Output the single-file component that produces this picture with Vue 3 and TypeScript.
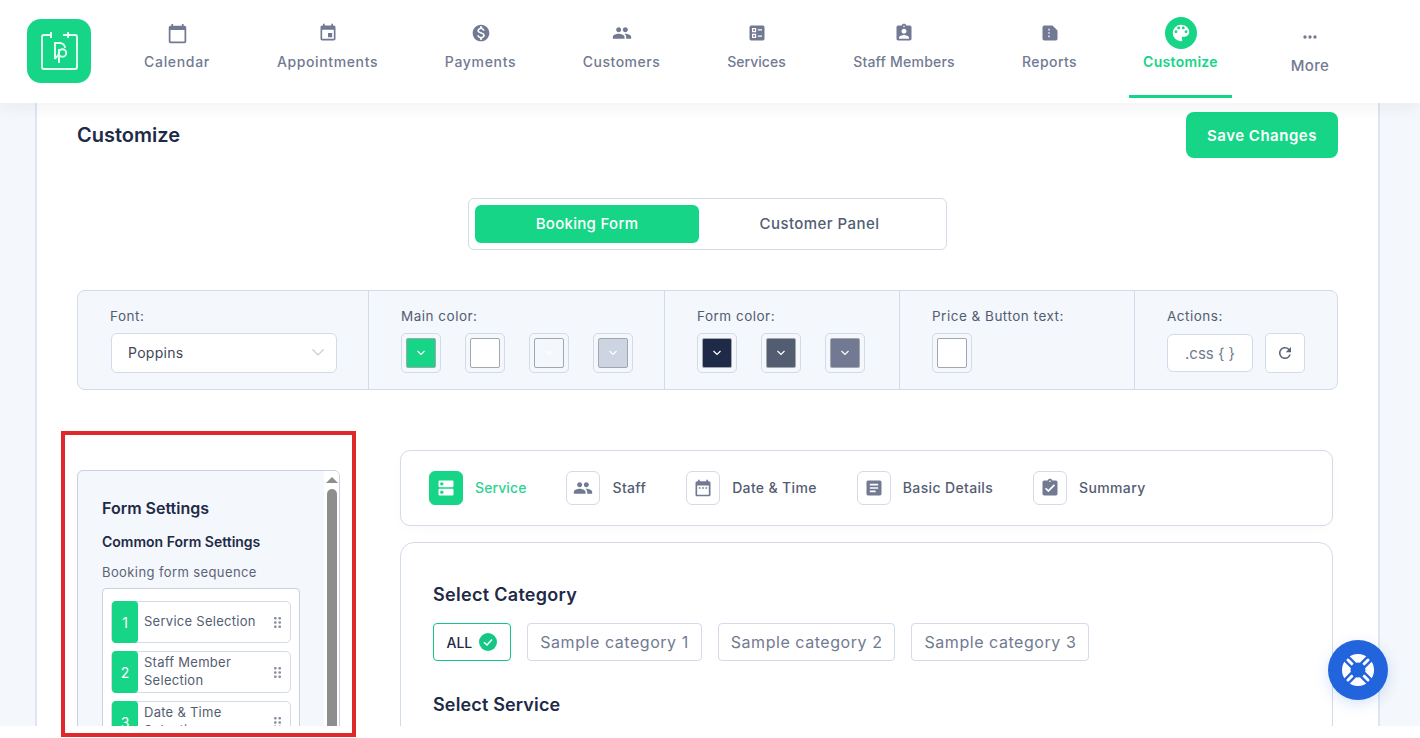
<script setup lang="ts">
interface NavItem {
  label: string;
  path: string;
  size: number;
  width: number;
  spacing: number;
  active?: boolean;
  more?: boolean;
}

const people =
  "M16 11c1.66 0 2.99-1.34 2.99-3S17.66 5 16 5c-1.66 0-3 1.34-3 3s1.34 3 3 3zm-8 0c1.66 0 2.99-1.34 2.99-3S9.66 5 8 5C6.34 5 5 6.34 5 8s1.34 3 3 3zm0 2c-2.33 0-7 1.17-7 3.5V19h14v-2.5c0-2.33-4.67-3.5-7-3.5zm8 0c-.29 0-.62.02-.97.05 1.16.84 1.97 1.97 1.97 3.45V19h6v-2.5c0-2.33-4.67-3.5-7-3.5z";

const navItems: NavItem[] = [
  { label: "Calendar", size: 21, width: 66, spacing: 0.67, path: "M20 3h-1V1h-2v2H7V1H5v2H4c-1.1 0-2 .9-2 2v16c0 1.1.9 2 2 2h16c1.1 0 2-.9 2-2V5c0-1.1-.9-2-2-2zm0 18H4V8h16v13z" },
  { label: "Appointments", size: 20, width: 101, spacing: 0.63, path: "M17 12h-5v5h5v-5zM16 1v2H8V1H6v2H5c-1.11 0-1.99.9-1.99 2L3 19c0 1.1.89 2 2 2h14c1.1 0 2-.9 2-2V5c0-1.1-.9-2-2-2h-1V1h-2zm3 18H5V8h14v11z" },
  { label: "Payments", size: 20, width: 71, spacing: 0.67, path: "M12 2C6.48 2 2 6.48 2 12s4.48 10 10 10 10-4.48 10-10S17.52 2 12 2zm1.41 16.09V20h-2.67v-1.93c-1.71-.36-3.16-1.46-3.27-3.4h1.96c.1 1.05.82 1.87 2.65 1.87 1.96 0 2.4-.98 2.4-1.59 0-.83-.44-1.61-2.67-2.14-2.48-.6-4.18-1.62-4.18-3.67 0-1.72 1.39-2.84 3.11-3.21V4h2.67v1.95c1.86.45 2.79 1.86 2.87 3.39H14.3c-.05-1.11-.64-1.87-2.22-1.87-1.5 0-2.4.68-2.4 1.64 0 .84.65 1.39 2.67 1.91s4.18 1.39 4.18 3.91c-.01 1.83-1.38 2.83-3.12 3.16z" },
  { label: "Customers", size: 20, width: 77, spacing: 0.52, path: people },
  { label: "Services", size: 20, width: 59, spacing: 0.05, path: "M5 3h14a2 2 0 0 1 2 2v14a2 2 0 0 1-2 2H5a2 2 0 0 1-2-2V5a2 2 0 0 1 2-2zM6 6v5h5V6zM7.5 7.5h2v2h-2zM13 7.5v1.5h5V7.5zM6 13v5h5v-5zM7.5 14.5h2v2h-2zM13 15v1.5h5V15z" },
  { label: "Staff Members", size: 20, width: 102, spacing: 0.22, path: "M19 3h-4.18C14.4 1.84 13.3 1 12 1c-1.3 0-2.4.84-2.82 2H5c-1.1 0-2 .9-2 2v14c0 1.1.9 2 2 2h14c1.1 0 2-.9 2-2V5c0-1.1-.9-2-2-2zm-7 0c.55 0 1 .45 1 1s-.45 1-1 1-1-.45-1-1 .45-1 1-1zm0 4c1.66 0 3 1.34 3 3s-1.34 3-3 3-3-1.34-3-3 1.34-3 3-3zm6 12H6v-1.4c0-2 4-3.1 6-3.1s6 1.1 6 3.1V19z" },
  { label: "Reports", size: 20, width: 55, spacing: 0.44, path: "M5 3h10l6 6v10a2 2 0 0 1-2 2H5a2 2 0 0 1-2-2V5a2 2 0 0 1 2-2zM10 7v2h1.6V7zM10 11v2h1.6v-2zM10 15v2h1.6v-2z" },
  { label: "Customize", size: 22, width: 75, spacing: 0.3, active: true, path: "M12 3a9 9 0 0 0 0 18c.83 0 1.5-.67 1.5-1.5 0-.39-.15-.74-.39-1.01-.23-.26-.38-.61-.38-.99 0-.83.67-1.5 1.5-1.5H16c2.76 0 5-2.24 5-5 0-4.42-4.03-8-9-8zm-5.5 9c-.83 0-1.5-.67-1.5-1.5S5.67 9 6.5 9 8 9.67 8 10.5 7.33 12 6.5 12zm3-4C8.67 8 8 7.33 8 6.5S8.67 5 9.5 5s1.5.67 1.5 1.5S10.33 8 9.5 8zm5 0c-.83 0-1.5-.67-1.5-1.5S13.67 5 14.5 5s1.5.67 1.5 1.5S15.33 8 14.5 8zm3 4c-.83 0-1.5-.67-1.5-1.5S16.67 9 17.5 9s1.5.67 1.5 1.5-.67 1.5-1.5 1.5z" },
  { label: "More", size: 20, width: 38, spacing: 0.3, more: true, path: "M6 10a2 2 0 1 0 0 4 2 2 0 0 0 0-4zm12 0a2 2 0 1 0 0 4 2 2 0 0 0 0-4zm-6 0a2 2 0 1 0 0 4 2 2 0 0 0 0-4z" },
];

const mainColors = [
  { bg: "#16d586", arrow: "#ffffff" },
  { bg: "#ffffff", arrow: "#ffffff" },
  { bg: "#f4f7fb", arrow: "#ffffff" },
  { bg: "#cdd4e2", arrow: "#ffffff" },
];
const formColors = ["#1e2a47", "#535d72", "#717a92"];

const steps = [
  { label: "Service", active: true, path: "M20 13H4c-.55 0-1 .45-1 1v6c0 .55.45 1 1 1h16c.55 0 1-.45 1-1v-6c0-.55-.45-1-1-1zM7 19c-1.1 0-2-.9-2-2s.9-2 2-2 2 .9 2 2-.9 2-2 2zM20 3H4c-.55 0-1 .45-1 1v6c0 .55.45 1 1 1h16c.55 0 1-.45 1-1V4c0-.55-.45-1-1-1zM7 9c-1.1 0-2-.9-2-2s.9-2 2-2 2 .9 2 2-.9 2-2 2z" },
  { label: "Staff", active: false, path: people },
  { label: "Date & Time", active: false, path: "M9 11H7v2h2v-2zm4 0h-2v2h2v-2zm4 0h-2v2h2v-2zm2-7h-1V2h-2v2H8V2H6v2H5c-1.11 0-1.99.9-1.99 2L3 20c0 1.1.89 2 2 2h14c1.1 0 2-.9 2-2V6c0-1.1-.9-2-2-2zm0 16H5V9h14v11z" },
  { label: "Basic Details", active: false, path: "M19 3H5c-1.1 0-2 .9-2 2v14c0 1.1.9 2 2 2h14c1.1 0 2-.9 2-2V5c0-1.1-.9-2-2-2zm-5 14H7v-2h7v2zm3-4H7v-2h10v2zm0-4H7V7h10v2z" },
  { label: "Summary", active: false, path: "M19 3h-4.18C14.4 1.84 13.3 1 12 1c-1.3 0-2.4.84-2.82 2H5c-1.1 0-2 .9-2 2v14c0 1.1.9 2 2 2h14c1.1 0 2-.9 2-2V5c0-1.1-.9-2-2-2zm-7 0c.55 0 1 .45 1 1s-.45 1-1 1-1-.45-1-1 .45-1 1-1zm-2 14l-4-4 1.41-1.41L10 14.17l6.59-6.59L18 9l-8 8z" },
];

const sequence = ["Service Selection", "Staff Member Selection", "Date & Time Selection"];
const categories = ["Sample category 1", "Sample category 2", "Sample category 3"];
</script>

<template>
  <div class="app">
    <div class="page">
      <header class="topbar">
        <div class="logo">
          <svg width="64" height="64" viewBox="0 0 64 64" fill="none" stroke="#e6fff4" stroke-width="1.9">
            <path d="M24 16H17a2 2 0 0 0-2 2v30a2 2 0 0 0 2 2h31a2 2 0 0 0 2-2V18a2 2 0 0 0-2-2H36" />
            <path d="M24 13v6M41 13v6" />
            <path d="M28 40V24h4.500c3.300 0 5.500 2.300 5.500 5" />
            <path d="M28 40l4-5" />
            <circle cx="35.500" cy="34" r="3.800" />
            <path d="M32 30v14" />
          </svg>
        </div>
        <nav class="nav">
          <a v-for="item in navItems" :key="item.label" class="nav-item" :class="{ active: item.active, more: item.more }">
            <span class="nav-icon">
              <svg :width="item.size" :height="item.size" viewBox="0 0 24 24" fill="currentColor" fill-rule="evenodd">
                <path :d="item.path" />
              </svg>
            </span>
            <span class="nav-label" :style="{ width: item.width + 'px', letterSpacing: item.spacing + 'px' }">{{ item.label }}</span>
          </a>
        </nav>
      </header>

      <main class="container">
        <div class="title-row">
          <h1>Customize</h1>
          <button class="save">Save Changes</button>
        </div>

        <div class="switch">
          <button class="switch-tab on">Booking Form</button>
          <button class="switch-tab">Customer Panel</button>
        </div>

        <section class="toolbar">
          <div class="cell">
            <label>Font:</label>
            <div class="select">
              <span>Poppins</span>
              <svg width="14" height="14" viewBox="0 0 14 14" fill="none" stroke="#c6ccd9" stroke-width="1.200"><path d="M1.500 4.500 7 10l5.500-5.500" /></svg>
            </div>
          </div>
          <div class="cell">
            <label>Main color:</label>
            <div class="swatches">
              <div v-for="c in mainColors" :key="c.bg" class="swatch">
                <div class="swatch-fill" :style="{ background: c.bg }">
                  <svg width="10" height="10" viewBox="0 0 10 10" fill="none" :stroke="c.arrow" stroke-width="1.200"><path d="M1.500 3 5 6.500 8.500 3" /></svg>
                </div>
              </div>
            </div>
          </div>
          <div class="cell">
            <label>Form color:</label>
            <div class="swatches">
              <div v-for="c in formColors" :key="c" class="swatch">
                <div class="swatch-fill" :style="{ background: c }">
                  <svg width="10" height="10" viewBox="0 0 10 10" fill="none" stroke="#ffffff" stroke-width="1.200"><path d="M1.500 3 5 6.500 8.500 3" /></svg>
                </div>
              </div>
            </div>
          </div>
          <div class="cell">
            <label>Price &amp; Button text:</label>
            <div class="swatches">
              <div class="swatch"><div class="swatch-fill"></div></div>
            </div>
          </div>
          <div class="cell">
            <label>Actions:</label>
            <div class="actions">
              <button class="css-btn">.css { }</button>
              <button class="reset-btn">
                <svg width="18" height="18" viewBox="0 0 24 24" fill="#5c6478"><path d="M17.650 6.350A7.958 7.958 0 0 0 12 4c-4.420 0-7.990 3.580-7.990 8s3.570 8 7.990 8c3.730 0 6.840-2.550 7.730-6h-2.080A5.990 5.990 0 0 1 12 18c-3.310 0-6-2.690-6-6s2.690-6 6-6c1.660 0 3.140.690 4.220 1.780L13 11h7V4l-2.350 2.350z" /></svg>
              </button>
            </div>
          </div>
        </section>

        <div class="workspace">
          <aside class="settings">
            <div class="settings-body">
              <h3>Form Settings</h3>
              <h4>Common Form Settings</h4>
              <p class="seq-label">Booking form sequence</p>
              <div class="seq-box">
                <div v-for="(s, i) in sequence" :key="s" class="seq-item">
                  <span class="seq-num">{{ i + 1 }}</span>
                  <span class="seq-text">{{ s }}</span>
                  <svg class="seq-grip" width="7" height="11" viewBox="0 0 7 11" fill="#868e9f">
                    <rect x="0" y="0" width="2.600" height="2.600" rx="1" /><rect x="4.400" y="0" width="2.600" height="2.600" rx="1" />
                    <rect x="0" y="4.200" width="2.600" height="2.600" rx="1" /><rect x="4.400" y="4.200" width="2.600" height="2.600" rx="1" />
                    <rect x="0" y="8.400" width="2.600" height="2.600" rx="1" /><rect x="4.400" y="8.400" width="2.600" height="2.600" rx="1" />
                  </svg>
                </div>
              </div>
            </div>
            <div class="scroll">
              <span class="scroll-arrow"></span>
              <span class="scroll-thumb"></span>
            </div>
          </aside>

          <div class="preview">
            <div class="steps">
              <div v-for="st in steps" :key="st.label" class="step" :class="{ on: st.active }">
                <span class="step-box">
                  <svg width="20" height="20" viewBox="0 0 24 24" fill="currentColor"><path :d="st.path" /></svg>
                </span>
                <span class="step-label">{{ st.label }}</span>
              </div>
            </div>
            <div class="form-card">
              <h2>Select Category</h2>
              <div class="chips">
                <span class="chip all">
                  ALL
                  <svg width="18" height="18" viewBox="0 0 18 18"><circle cx="9" cy="9" r="9" fill="#16c784" /><path d="M5 9.200 8 12l5-5.500" fill="none" stroke="#fff" stroke-width="1.500" /></svg>
                </span>
                <span v-for="c in categories" :key="c" class="chip">{{ c }}</span>
              </div>
              <h2 class="second">Select Service</h2>
            </div>
          </div>
        </div>
      </main>
    </div>

    <!-- annotation drawn over the screenshot -->
    <div class="highlight"></div>

    <button class="help">
      <svg width="60" height="60" viewBox="0 0 60 60">
        <circle cx="30" cy="30" r="16" fill="#fff" />
        <g stroke="#2164dc" stroke-width="7.500">
          <path d="M18 18l24 24M42 18 18 42" />
        </g>
        <g stroke="#fff" stroke-width="3" stroke-linecap="round">
          <path d="M20 20l4 4M40 20l-4 4M20 40l4-4M40 40l-4-4" />
        </g>
        <circle cx="30" cy="30" r="7.500" fill="#2164dc" />
      </svg>
    </button>
  </div>
</template>

<style>
html,
body {
  background: #fff;
}
</style>

<style scoped>
.app {
  position: relative;
  height: 738px;
  overflow: hidden;
  font-family: Inter, "Noto Sans", sans-serif;
  color: #1e2a47;
}
.page {
  height: 726px;
  overflow: hidden;
  background: #f4f7fb;
}
.topbar {
  position: relative;
  z-index: 2;
  display: flex;
  height: 103px;
  background: #fff;
  box-shadow: 0 4px 18px rgba(30, 42, 71, 0.06);
}
.logo {
  width: 64px;
  height: 64px;
  margin: 19px 39px 0 27px;
  border-radius: 14px;
  background: #16d586;
}
.nav {
  display: flex;
  gap: 39px;
  height: 98px;
}
.nav-item {
  display: flex;
  flex-direction: column;
  align-items: center;
  box-sizing: border-box;
  padding: 17px 14px 0;
  color: #717a92;
}
.nav-item.active {
  margin-left: -1px;
  color: #16d586;
  border-bottom: 3px solid #16d586;
}
.nav-item.more {
  padding-top: 21px;
  margin-left: 6px;
}
.nav-icon {
  display: flex;
  align-items: center;
  justify-content: center;
  width: 32px;
  height: 32px;
  border-radius: 50%;
}
.active .nav-icon {
  background: #16d586;
  color: #fff;
}
.nav-label {
  display: flex;
  justify-content: center;
  margin-top: 3px;
  font-size: 14px;
  font-weight: 500;
  line-height: 20px;
  white-space: nowrap;
}
.active .nav-label {
  font-weight: 600;
}
.more .nav-label {
  font-size: 15px;
}
.container {
  height: 623px;
  margin: 0 40px 0 35px;
  padding: 9px 40px 0;
  background: #fff;
  border-left: 2px solid #dfe6f2;
  border-right: 2px solid #dfe6f2;
}
.title-row {
  display: flex;
  align-items: center;
  justify-content: space-between;
}
h1 {
  margin: 0;
  font-size: 20px;
  font-weight: 600;
  color: #1e2a47;
}
button {
  font-family: inherit;
  cursor: pointer;
}
.save {
  width: 152px;
  height: 46px;
  padding: 0;
  border: none;
  border-radius: 8px;
  background: #16d586;
  color: #fff;
  font-size: 15px;
  font-weight: 600;
  letter-spacing: 0.5px;
}
.switch {
  display: flex;
  box-sizing: border-box;
  width: 479px;
  height: 52px;
  margin: 40px auto 0;
  padding: 6px;
  background: #fff;
  border: 1px solid #d3dae8;
  border-radius: 6px;
}
.switch-tab {
  flex: 1;
  padding: 0 0 2px;
  border: none;
  border-radius: 6px;
  background: none;
  color: #535d72;
  font-size: 15px;
  font-weight: 500;
  letter-spacing: 0.45px;
}
.switch-tab.on {
  flex: 0 0 224px;
  background: #16d586;
  color: #fff;
  letter-spacing: 0.3px;
}
.toolbar {
  display: grid;
  grid-template-columns: 291px 296px 235px 235px 1fr;
  box-sizing: border-box;
  height: 100px;
  margin-top: 40px;
  background: #f4f7fb;
  border: 1px solid #d3dae8;
  border-radius: 8px;
}
.cell {
  display: flex;
  flex-direction: column;
  padding: 15px 0 0 32px;
  border-right: 1px solid #d3dae8;
}
.cell:last-child {
  border-right: none;
}
.cell label {
  height: 20px;
  margin-bottom: 7px;
  font-size: 13.5px;
  line-height: 20px;
  letter-spacing: 0.5px;
  color: #535d72;
}
.select {
  display: flex;
  align-items: center;
  justify-content: space-between;
  box-sizing: border-box;
  width: 226px;
  height: 40px;
  margin-left: 1px;
  padding: 0 11px 2px 16px;
  background: #fff;
  border: 1px solid #d3dae8;
  border-radius: 6px;
  font-size: 14px;
  letter-spacing: 0.3px;
  color: #3f4759;
}
.swatches {
  display: flex;
  gap: 24px;
}
.swatch {
  box-sizing: border-box;
  width: 40px;
  height: 40px;
  padding: 4px;
  background: #f4f7fb;
  border: 1px solid #d3dae8;
  border-radius: 5px;
}
.swatch-fill {
  display: flex;
  align-items: center;
  justify-content: center;
  box-sizing: border-box;
  height: 100%;
  background: #fff;
  border: 1px solid #a2a6ad;
  border-radius: 2px;
}
.actions {
  display: flex;
  align-items: center;
  gap: 12px;
}
.css-btn {
  width: 86px;
  height: 38px;
  padding: 0;
  background: #fff;
  border: 1px solid #d3dae8;
  border-radius: 6px;
  color: #717a92;
  font-size: 15px;
}
.reset-btn {
  display: flex;
  align-items: center;
  justify-content: center;
  width: 40px;
  height: 40px;
  padding: 0;
  background: #fff;
  border: 1px solid #d3dae8;
  border-radius: 5px;
}
.workspace {
  display: flex;
  margin-top: 60px;
  gap: 60px;
}
.settings {
  display: flex;
  flex: 0 0 263px;
  box-sizing: border-box;
  height: 400px;
  margin-top: 20px;
  background: #f4f7fb;
  border: 1px solid #c9d1e0;
  border-radius: 6px;
  overflow: hidden;
}
.settings-body {
  flex: 1;
  padding: 27px 0 0 24px;
}
h3 {
  margin: 0;
  font-size: 16px;
  font-weight: 600;
  line-height: 20px;
}
h4 {
  margin: 14px 0 0;
  font-size: 14px;
  font-weight: 600;
  line-height: 20px;
}
.seq-label {
  margin: 11px 0 0;
  font-size: 13px;
  line-height: 18px;
  letter-spacing: 0.4px;
  color: #5c6478;
}
.seq-box {
  box-sizing: border-box;
  width: 198px;
  margin-top: 7px;
  padding: 12px 8px;
  background: #fff;
  border: 1px solid #c9d1e0;
  border-radius: 4px;
}
.seq-item {
  display: flex;
  align-items: center;
  box-sizing: border-box;
  height: 42px;
  margin-bottom: 8px;
  background: #fff;
  border: 1px solid #d3dae8;
  border-radius: 5px;
}
.seq-num {
  display: flex;
  align-items: center;
  justify-content: center;
  flex: 0 0 26px;
  align-self: stretch;
  margin: -1px 0;
  border-radius: 4px;
  background: #16d586;
  color: #fff;
  font-size: 14px;
}
.seq-text {
  flex: 1;
  padding: 0 0 2px 6px;
  font-size: 13px;
  line-height: 18px;
  letter-spacing: 0.27px;
  color: #535d72;
}
.seq-grip {
  margin-right: 9px;
}
.scroll {
  display: flex;
  flex-direction: column;
  align-items: center;
  flex: 0 0 15px;
  background: #fff;
  padding-top: 6px;
}
.scroll-arrow {
  width: 0;
  height: 0;
  border-left: 6px solid transparent;
  border-right: 6px solid transparent;
  border-bottom: 6px solid #8e8e8e;
}
.scroll-thumb {
  flex: 1;
  width: 10px;
  margin-top: 6px;
  border-radius: 5px 5px 0 0;
  background: #8e8e8e;
}
.preview {
  display: flex;
  flex-direction: column;
  gap: 16px;
  width: 933px;
}
.steps {
  display: flex;
  align-items: center;
  box-sizing: border-box;
  height: 76px;
  padding-left: 28px;
  gap: 40px;
  background: #fff;
  border: 1px solid #d3dae8;
  border-radius: 10px;
  box-shadow: 0 4px 12px rgba(30, 42, 71, 0.02);
}
.step {
  display: flex;
  align-items: center;
  gap: 12px;
  color: #535d72;
}
.step-box {
  display: flex;
  align-items: center;
  justify-content: center;
  box-sizing: border-box;
  width: 34px;
  height: 34px;
  color: #717a92;
  border: 1px solid #d3dae8;
  border-radius: 6px;
}
.step.on {
  color: #2ed391;
}
.step.on .step-box {
  background: #16d586;
  border-color: #16d586;
  color: #fff;
}
.step-label {
  padding-bottom: 1px;
  font-size: 14px;
  font-weight: 500;
  letter-spacing: 0.35px;
}
.step.on .step-label {
  letter-spacing: 0.1px;
}
.form-card {
  box-sizing: border-box;
  height: 300px;
  padding: 40px 32px;
  background: #fff;
  border: 1px solid #d3dae8;
  border-radius: 14px;
}
h2 {
  margin: 0;
  font-size: 18px;
  font-weight: 600;
  line-height: 24px;
  letter-spacing: 0.3px;
}
h2.second {
  margin-top: 32px;
  letter-spacing: 0.15px;
}
.chips {
  display: flex;
  gap: 16px;
  margin-top: 16px;
}
.chip {
  display: flex;
  align-items: center;
  gap: 7px;
  box-sizing: border-box;
  height: 38px;
  padding: 0 12px 1px;
  border: 1px solid #d3dae8;
  border-radius: 4px;
  font-size: 16px;
  letter-spacing: 0.55px;
  color: #717a92;
}
.chip.all {
  padding: 0 13px 0 12.5px;
  border-color: #16c784;
  color: #1e2a47;
  font-size: 14px;
  font-weight: 500;
  letter-spacing: 0;
}
.highlight {
  position: absolute;
  left: 61px;
  top: 431px;
  width: 295px;
  height: 306px;
  box-sizing: border-box;
  border: 4px solid #e0282b;
  pointer-events: none;
}
.help {
  position: absolute;
  left: 1328px;
  top: 640px;
  width: 60px;
  height: 60px;
  padding: 0;
  border: none;
  border-radius: 50%;
  background: #2164dc;
  box-shadow: 0 4px 14px rgba(33, 100, 220, 0.18);
}
.help svg {
  display: block;
}
</style>
